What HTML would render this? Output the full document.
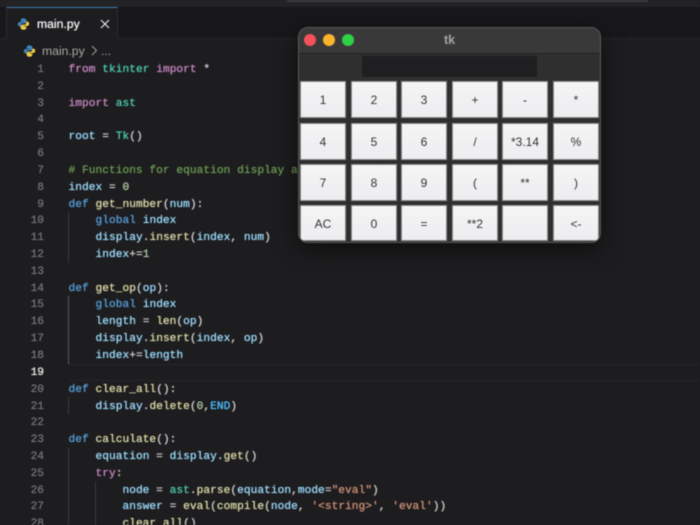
<!DOCTYPE html>
<html><head><meta charset="utf-8">
<style>
html,body{margin:0;padding:0;background:#1d1c1e;}
#r{position:relative;width:700px;height:525px;overflow:hidden;background:#1d1c1e;font-family:"Liberation Sans",sans-serif;filter:blur(.4px);}
#top{position:absolute;left:0;top:0;width:700px;height:39px;background:#18171a;border-bottom:1px solid #272628;box-sizing:border-box;}
#strip{position:absolute;left:0;top:0;width:700px;height:7px;background:#232225;}
#strip2{position:absolute;left:287px;top:0;width:361px;height:2px;background:#3c3b3d;}
#tab{position:absolute;left:6px;top:7px;width:112px;height:32px;background:#1d1c1e;border-top:1px solid #3d7fb5;border-right:1px solid #2b2b2d;border-left:1px solid #2b2b2d;box-sizing:border-box;}
.t{position:absolute;white-space:pre;}
.ln{position:absolute;left:0;width:44px;text-align:right;font:11.2px/17px "Liberation Mono",monospace;color:#747476;transform:translateY(2px);text-shadow:0 0 .7px currentColor;}
.c{position:absolute;left:68.5px;white-space:pre;font:11.2px/17px "Liberation Mono",monospace;letter-spacing:.03px;color:#d4d4d4;transform:translateY(2px);text-shadow:0 0 .8px currentColor;}
.k{color:#c586c0}.d{color:#569cd6}.g{color:#4ec9b0}.v{color:#9cdcfe}.f{color:#dcdcaa}.s{color:#ce9178}.m{color:#6a9955}.n{color:#b5cea8}.e{color:#4fc1ff}
.guide{position:absolute;width:1px;background:#3b3b3d;}
#cur{position:absolute;left:68px;top:364px;width:632px;height:17px;border-top:1px solid #262527;border-bottom:1px solid #262527;box-sizing:border-box;}
#win{position:absolute;left:298px;top:27px;width:303px;height:216px;background:#302f30;border-radius:10px;border:1px solid #5a595a;box-sizing:border-box;box-shadow:0 6px 24px rgba(0,0,0,.55);overflow:hidden;}
#tb{position:absolute;left:0;top:0;width:301px;height:26px;background:#3a393a;border-bottom:1px solid #232223;box-sizing:border-box;}
.dot{position:absolute;top:6px;width:12px;height:12px;border-radius:50%;}
#disp{position:absolute;left:63px;top:28px;width:175px;height:21px;background:#1f1e20;}
.b{position:absolute;width:46px;height:37px;box-sizing:border-box;border:1.5px solid #8f8e8f;background:linear-gradient(#f6f5f6,#f0eff1 60%,#eeedef);color:#333;font-size:12px;line-height:36px;text-align:center;}
</style></head><body>
<div id="r">
<div id="top"></div><div id="strip"></div><div id="strip2"></div>
<div id="tab"></div>
<svg style="position:absolute;left:17px;top:17px" width="13" height="14" viewBox="0 0 16 16"><path fill="#3f86c0" d="M8 1C5 1 4.600 2.200 4.600 3.400V5H8.200V5.600H3.300C1.800 5.600 1 6.800 1 8.300S1.800 11 3.300 11H4.600V9.300C4.600 8 5.600 7.200 6.800 7.200H9.700C10.800 7.200 11.500 6.400 11.500 5.400V3.300C11.500 2 10.200 1 8 1Z"/><path fill="#f2cf4a" d="M8 15C11 15 11.400 13.800 11.400 12.600V11H7.800V10.400H12.700C14.200 10.400 15 9.200 15 7.700S14.200 5 12.700 5H11.400V6.700C11.400 8 10.400 8.800 9.200 8.800H6.300C5.200 8.800 4.500 9.600 4.500 10.600V12.700C4.500 14 5.800 15 8 15Z"/></svg>
<div class="t" style="left:37px;top:16px;font-size:12.200px;line-height:16px;color:#f6f6f6;text-shadow:0 0 .7px #fff;">main.py</div>
<svg style="position:absolute;left:100px;top:19px" width="10" height="10" viewBox="0 0 10 10"><path d="M1 1L9 9M9 1L1 9" stroke="#e4e4e4" stroke-width="1.200" fill="none"/></svg>
<svg style="position:absolute;left:23px;top:44px" width="13" height="14" viewBox="0 0 16 16"><path fill="#3f86c0" d="M8 1C5 1 4.600 2.200 4.600 3.400V5H8.200V5.600H3.300C1.800 5.600 1 6.800 1 8.300S1.800 11 3.300 11H4.600V9.300C4.600 8 5.600 7.200 6.800 7.200H9.700C10.800 7.200 11.500 6.400 11.500 5.400V3.300C11.500 2 10.200 1 8 1Z"/><path fill="#f2cf4a" d="M8 15C11 15 11.400 13.800 11.400 12.600V11H7.800V10.400H12.700C14.200 10.400 15 9.200 15 7.700S14.200 5 12.700 5H11.400V6.700C11.400 8 10.400 8.800 9.200 8.800H6.300C5.200 8.800 4.500 9.600 4.500 10.600V12.700C4.500 14 5.800 15 8 15Z"/></svg>
<div class="t" style="left:42px;top:43px;font-size:12.200px;line-height:16px;color:#a8a8a8;">main.py</div>
<svg style="position:absolute;left:90px;top:45px" width="8" height="11" viewBox="0 0 8 11"><path d="M2 1L6.500 5.500L2 10" stroke="#a0a0a0" stroke-width="1" fill="none"/></svg>
<div class="t" style="left:101px;top:43px;font-size:12px;line-height:16px;color:#a8a8a8;">...</div>

<div id="cur"></div>
<div class="guide" style="left:68px;top:212px;height:51px"></div>
<div class="guide" style="left:68px;top:296px;height:68px;background:#5c5c5e"></div>
<div class="guide" style="left:68px;top:397px;height:17px"></div>
<div class="guide" style="left:68px;top:448px;height:77px"></div>
<div class="guide" style="left:95px;top:482px;height:43px"></div>

<div class="ln" style="top:60px">1</div><div class="c" style="top:60px"><span class="k">from</span> <span class="g">tkinter</span> <span class="k">import</span> *</div>
<div class="ln" style="top:77px">2</div>
<div class="ln" style="top:94px">3</div><div class="c" style="top:94px"><span class="k">import</span> <span class="g">ast</span></div>
<div class="ln" style="top:110px">4</div>
<div class="ln" style="top:127px">5</div><div class="c" style="top:127px"><span class="v">root</span> = <span class="g">Tk</span>()</div>
<div class="ln" style="top:144px">6</div>
<div class="ln" style="top:161px">7</div><div class="c m" style="top:161px"># Functions for equation display and calculation</div>
<div class="ln" style="top:178px">8</div><div class="c" style="top:178px"><span class="v">index</span> = <span class="n">0</span></div>
<div class="ln" style="top:195px">9</div><div class="c" style="top:195px"><span class="d">def</span> <span class="f">get_number</span>(<span class="v">num</span>):</div>
<div class="ln" style="top:211px">10</div><div class="c" style="top:211px">    <span class="d">global</span> <span class="v">index</span></div>
<div class="ln" style="top:228px">11</div><div class="c" style="top:228px">    <span class="v">display</span>.<span class="f">insert</span>(<span class="v">index</span>, <span class="v">num</span>)</div>
<div class="ln" style="top:245px">12</div><div class="c" style="top:245px">    <span class="v">index</span>+=<span class="n">1</span></div>
<div class="ln" style="top:262px">13</div>
<div class="ln" style="top:279px">14</div><div class="c" style="top:279px"><span class="d">def</span> <span class="f">get_op</span>(<span class="v">op</span>):</div>
<div class="ln" style="top:295px">15</div><div class="c" style="top:295px">    <span class="d">global</span> <span class="v">index</span></div>
<div class="ln" style="top:312px">16</div><div class="c" style="top:312px">    <span class="v">length</span> = <span class="f">len</span>(<span class="v">op</span>)</div>
<div class="ln" style="top:329px">17</div><div class="c" style="top:329px">    <span class="v">display</span>.<span class="f">insert</span>(<span class="v">index</span>, <span class="v">op</span>)</div>
<div class="ln" style="top:346px">18</div><div class="c" style="top:346px">    <span class="v">index</span>+=<span class="v">length</span></div>
<div class="ln" style="top:363px;color:#f0f0f0">19</div>
<div class="ln" style="top:380px">20</div><div class="c" style="top:380px"><span class="d">def</span> <span class="f">clear_all</span>():</div>
<div class="ln" style="top:397px">21</div><div class="c" style="top:397px">    <span class="v">display</span>.<span class="f">delete</span>(<span class="n">0</span>,<span class="e">END</span>)</div>
<div class="ln" style="top:413px">22</div>
<div class="ln" style="top:430px">23</div><div class="c" style="top:430px"><span class="d">def</span> <span class="f">calculate</span>():</div>
<div class="ln" style="top:447px">24</div><div class="c" style="top:447px">    <span class="v">equation</span> = <span class="v">display</span>.<span class="f">get</span>()</div>
<div class="ln" style="top:464px">25</div><div class="c" style="top:464px">    <span class="k">try</span>:</div>
<div class="ln" style="top:481px">26</div><div class="c" style="top:481px">        <span class="v">node</span> = <span class="g">ast</span>.<span class="f">parse</span>(<span class="v">equation</span>,<span class="v">mode</span>=<span class="s">"eval"</span>)</div>
<div class="ln" style="top:497px">27</div><div class="c" style="top:497px">        <span class="v">answer</span> = <span class="f">eval</span>(<span class="f">compile</span>(<span class="v">node</span>, <span class="s">'&lt;string&gt;'</span>, <span class="s">'eval'</span>))</div>
<div class="ln" style="top:514px">28</div><div class="c" style="top:514px">        <span class="f">clear_all</span>()</div>

<div id="win">
<div id="tb">
<div class="dot" style="left:5px;background:#f4515a"></div>
<div class="dot" style="left:24px;background:#fbb52c"></div>
<div class="dot" style="left:43px;background:#2fd145"></div>
<div class="t" style="left:0;width:301px;text-align:center;top:4px;font-size:12.500px;line-height:16px;font-weight:700;color:#a5a4a5;">tk</div>
</div>
<div id="disp"></div>
<div class="b" style="left:1px;top:53px">1</div><div class="b" style="left:52px;top:53px">2</div><div class="b" style="left:102px;top:53px">3</div><div class="b" style="left:153px;top:53px">+</div><div class="b" style="left:203px;top:53px">-</div><div class="b" style="left:254px;top:53px">*</div>
<div class="b" style="left:1px;top:95px">4</div><div class="b" style="left:52px;top:95px">5</div><div class="b" style="left:102px;top:95px">6</div><div class="b" style="left:153px;top:95px">/</div><div class="b" style="left:203px;top:95px">*3.14</div><div class="b" style="left:254px;top:95px">%</div>
<div class="b" style="left:1px;top:136px">7</div><div class="b" style="left:52px;top:136px">8</div><div class="b" style="left:102px;top:136px">9</div><div class="b" style="left:153px;top:136px">(</div><div class="b" style="left:203px;top:136px">**</div><div class="b" style="left:254px;top:136px">)</div>
<div class="b" style="left:1px;top:177px;height:36px">AC</div><div class="b" style="left:52px;top:177px;height:36px">0</div><div class="b" style="left:102px;top:177px;height:36px">=</div><div class="b" style="left:153px;top:177px;height:36px">**2</div><div class="b" style="left:203px;top:177px;height:36px"></div><div class="b" style="left:254px;top:177px;height:36px">&lt;-</div>
</div>
</div>
</body></html>
